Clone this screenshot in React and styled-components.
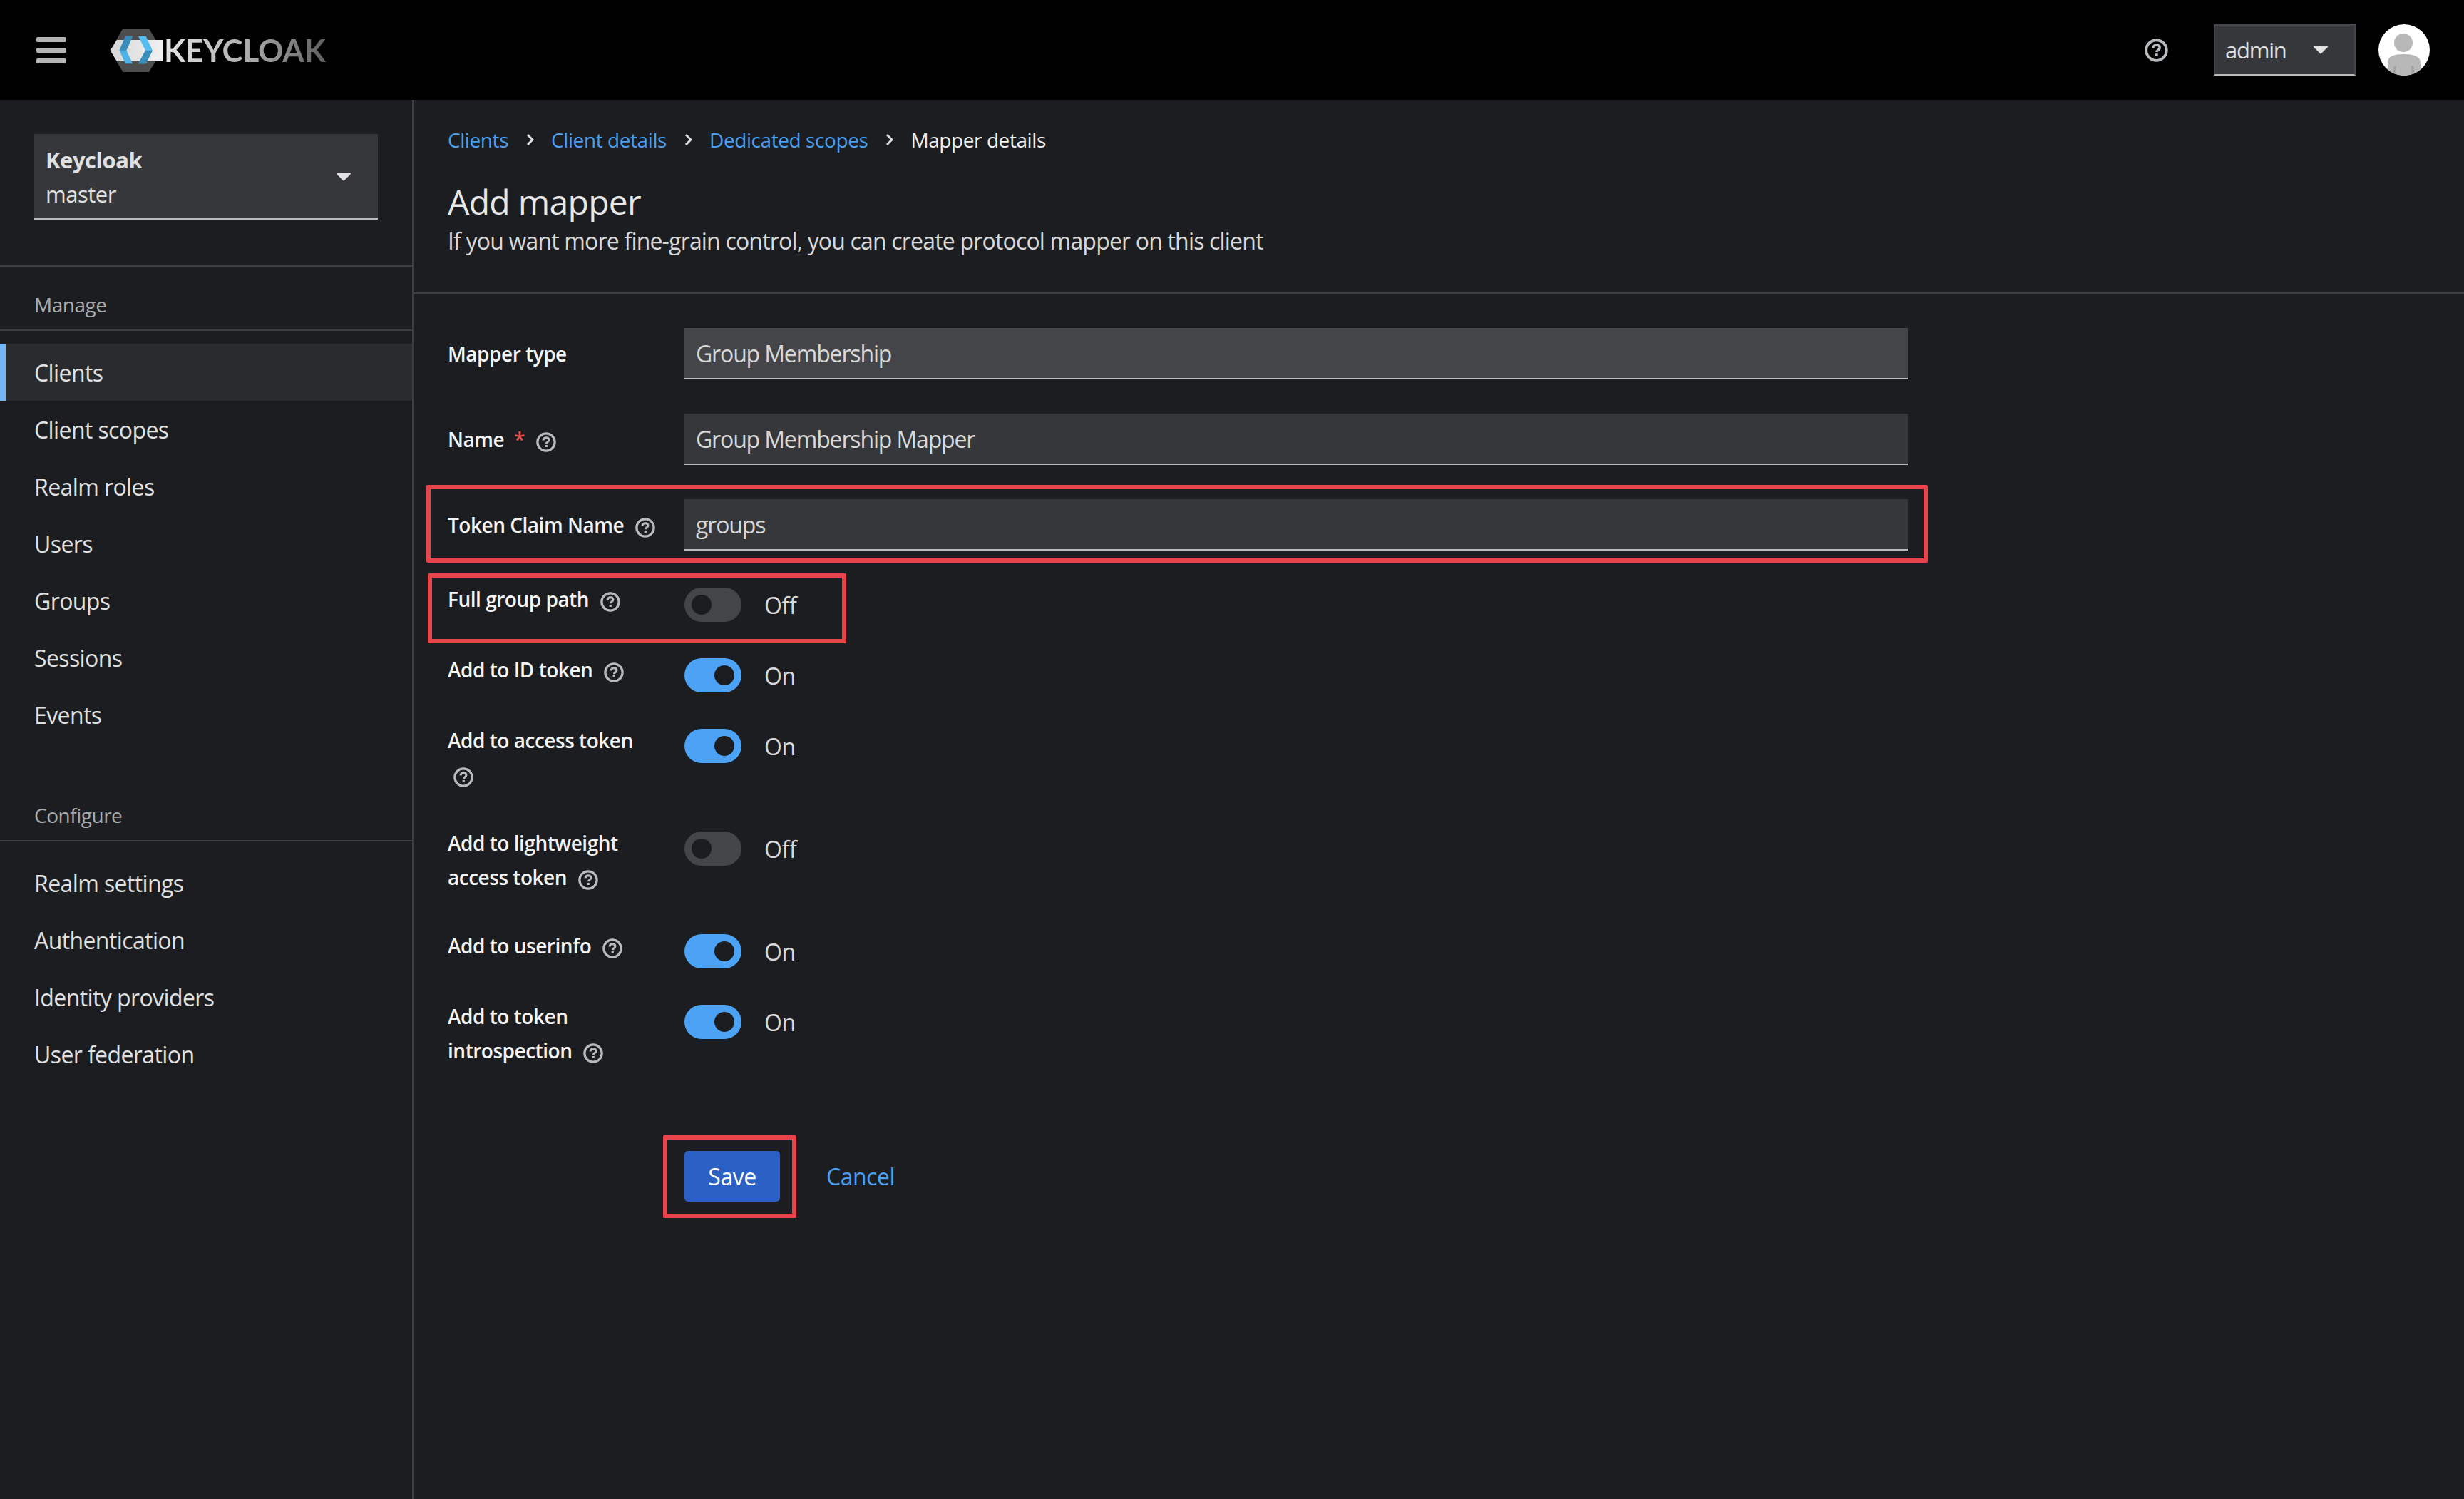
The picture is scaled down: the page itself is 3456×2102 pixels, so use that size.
import React from "react";
import styled, { createGlobalStyle } from "styled-components";

const GlobalStyle = createGlobalStyle`
  html, body {
    margin: 0;
    padding: 0;
    background: #1b1d21;
  }
  * {
    box-sizing: border-box;
  }
  body {
    font-family: "Open Sans", "Noto Sans", sans-serif;
    letter-spacing: -0.48px;
    color: #e0e0e0;
  }
`;

const HelpIcon = ({ size = 28 }) => (
  <svg width={size} height={size} viewBox="0 0 24 24" fill="none">
    <circle cx="12" cy="12" r="10.4" stroke="#b8bbbe" strokeWidth="2.8" />
    <path
      d="M8.6 9.8c0-2 1.5-3.2 3.5-3.2 1.9 0 3.3 1.1 3.3 2.8 0 2.4-3.1 2.4-3.1 4.5"
      stroke="#b8bbbe"
      strokeWidth="2.6"
      fill="none"
    />
    <rect x="10.8" y="15.4" width="2.8" height="2.6" fill="#b8bbbe" />
  </svg>
);

const Caret = () => (
  <svg width="20" height="12" viewBox="0 0 20 12">
    <path d="M1 0.5h18a1 1 0 0 1 .7 1.7l-9 9a1 1 0 0 1-1.4 0l-9-9A1 1 0 0 1 1 .5z" fill="#e0e0e0" />
  </svg>
);

const Logo = () => (
  <svg width="75" height="62" viewBox="70 62 225 186">
    <defs>
      <linearGradient id="logoBand" x1="0" x2="1" y1="0" y2="0">
        <stop offset="0" stopColor="#d6d6d6" />
        <stop offset="0.5" stopColor="#e4e4e4" />
        <stop offset="1" stopColor="#f0f0f0" />
      </linearGradient>
    </defs>
    <path d="M125 65H235L290 157 235 248H125L72 157z" fill="#4d4d4d" />
    <path d="M100 113H293V203H100L72 157z" fill="url(#logoBand)" />
    <path d="M136 97 110 157 136 213H166L140 157 166 97z" fill="#4db3e6" />
    <path d="M136 97H166L140 157H110z" fill="#3a8dbb" />
    <path d="M190 97H222L250 157 222 213H190L220 157z" fill="#56bdf0" />
    <path d="M220 157H250L222 213H190z" fill="#3a8dbb" />
  </svg>
);

const Avatar = () => (
  <svg width="72" height="72" viewBox="0 0 72 72">
    <defs>
      <clipPath id="avatarClip">
        <circle cx="36" cy="36" r="36" />
      </clipPath>
    </defs>
    <g clipPath="url(#avatarClip)">
      <rect width="72" height="72" fill="#fff" />
      <circle cx="35" cy="26" r="13" fill="#b8b8b8" />
      <path d="M13 72V54c0-9 8-12 22-12s24 3 24 12v18z" fill="#b8b8b8" />
      <path d="M21 72V62c0-3 2-4 4-4v14zM50 72V62c0-3-2-4-4-4v14z" fill="#a4a4a4" />
    </g>
  </svg>
);

const Page = styled.div`
  width: 3456px;
  min-height: 2102px;
  display: flex;
  flex-direction: column;
`;

const Header = styled.header`
  height: 140px;
  background: #000;
  display: flex;
  align-items: center;
  padding: 0 48px 0 51px;
`;

const Burger = styled.div`
  width: 42px;
  height: 37px;
  display: flex;
  flex-direction: column;
  justify-content: space-between;
  margin-right: 61px;
`;

const BurgerBar = styled.span`
  display: block;
  height: 7px;
  border-radius: 2px;
  background: #b4b4b4;
`;

const Brand = styled.div`
  display: flex;
  align-items: center;
  gap: 1px;
`;

const BrandName = styled.span`
  font-family: "Lato", "Liberation Sans", sans-serif;
  font-size: 44px;
  font-weight: 700;
  line-height: 62px;
  letter-spacing: -0.2px;
  background: linear-gradient(90deg, #e6e6e6 0%, #a8a8a8 55%, #5f5f5f 100%);
  -webkit-background-clip: text;
  background-clip: text;
  color: transparent;
`;

const HeaderRight = styled.div`
  margin-left: auto;
  display: flex;
  align-items: center;
`;

const HelpButton = styled.div`
  display: flex;
  margin-right: 64px;
`;

const UserMenu = styled.div`
  width: 199px;
  height: 72px;
  background: #36373a;
  border: 2px solid #444548;
  border-bottom: 2px solid #b8bbbe;
  display: flex;
  align-items: center;
  gap: 38px;
  padding: 0 0 0 14px;
  font-size: 31px;
  letter-spacing: -1.24px;
  margin-right: 32px;
`;

const Body = styled.div`
  flex: 1;
  display: flex;
`;

const Sidebar = styled.aside`
  width: 580px;
  flex: none;
  border-right: 2px solid #3c3f42;
  padding-top: 48px;
`;

const RealmBox = styled.div`
  margin: 0 48px;
  width: 482px;
  height: 120px;
  background: #36373a;
  border-bottom: 2px solid #b8bbbe;
  padding: 12px 18px 0 16px;
  position: relative;
  font-size: 31px;
  line-height: 48px;
`;

const RealmName = styled.div`
  font-weight: 700;
`;

const RealmCaret = styled.span`
  position: absolute;
  right: 38px;
  top: 54px;
  display: flex;
`;

const NavSection = styled.div`
  border-top: ${(p) => (p.$first ? "2px solid #3c3f42" : "none")};
  margin-top: ${(p) => p.$top}px;
`;

const NavTitle = styled.div`
  height: 90px;
  padding: 35px 48px 0;
  font-size: 28px;
  line-height: 36px;
  color: #a8abae;
  border-bottom: 2px solid #3c3f42;
  margin-bottom: 18px;
`;

const NavItem = styled.div`
  height: 80px;
  display: flex;
  align-items: center;
  padding-left: 48px;
  font-size: 32px;
  letter-spacing: -0.6px;
  color: #e0e0e0;
  background: ${(p) => (p.$active ? "#292b2f" : "transparent")};
  box-shadow: ${(p) => (p.$active ? "inset 8px 0 0 #73b5f5" : "none")};
`;

const Main = styled.main`
  flex: 1;
  min-width: 0;
`;

const PageHead = styled.div`
  height: 272px;
  border-bottom: 2px solid #3c3f42;
  padding: 34px 48px 0;
`;

const Crumbs = styled.nav`
  display: flex;
  align-items: center;
  height: 44px;
  font-size: 28px;
  letter-spacing: -0.42px;
`;

const Crumb = styled.span`
  color: ${(p) => (p.$link ? "#4a9fee" : "#f0f0f0")};
`;

const CrumbSep = styled.svg`
  margin: 0 24px;
  flex: none;
`;

const Title = styled.h1`
  margin: 36px 0 0;
  font-size: 48px;
  line-height: 58px;
  font-weight: 400;
  letter-spacing: -0.7px;
  color: #e8e8e8;
`;

const Lead = styled.p`
  margin: 2px 0 0;
  font-size: 32px;
  line-height: 48px;
  letter-spacing: -0.82px;
  color: #d8d8d8;
`;

const Form = styled.form`
  padding: 48px 0 0 48px;
  display: flex;
  flex-direction: column;
`;

const Row = styled.div`
  display: flex;
  align-items: ${(p) => (p.$center ? "center" : "flex-start")};
  height: ${(p) => p.$h}px;
  position: relative;
`;

const LabelCell = styled.div`
  width: 332px;
  flex: none;
  padding-right: 24px;
  font-size: 28px;
  font-weight: 600;
  line-height: 48px;
  color: #f4f4f4;
  margin-top: ${(p) => p.$top || 0}px;
`;

const Required = styled.span`
  color: #e8504a;
  margin-left: 14px;
`;

const Hint = styled.span`
  display: ${(p) => (p.$block ? "flex" : "inline-flex")};
  vertical-align: -7px;
  margin-left: ${(p) => p.$gap ?? 16}px;
  margin-top: ${(p) => (p.$block ? 14 : 0)}px;
`;

const TextInput = styled.div`
  width: 1716px;
  height: 72px;
  padding-left: 16px;
  display: flex;
  align-items: center;
  font-size: 32px;
  letter-spacing: -1.15px;
  color: #d8d8d8;
  background: ${(p) => (p.$readOnly ? "#444548" : "#36373a")};
  border-bottom: 2px solid #b8bbbe;
`;

const SwitchWrap = styled.div`
  display: flex;
  align-items: center;
  gap: 32px;
  font-size: 32px;
  letter-spacing: -0.3px;
  color: #d8d8d8;
`;

const Track = styled.span`
  width: 80px;
  height: 48px;
  border-radius: 24px;
  display: flex;
  align-items: center;
  padding: 0 10px;
  justify-content: ${(p) => (p.$on ? "flex-end" : "flex-start")};
  background: ${(p) => (p.$on ? "#4ca3f5" : "#444548")};
`;

const Knob = styled.span`
  width: 28px;
  height: 28px;
  border-radius: 50%;
  background: #1b1d21;
`;

const Actions = styled.div`
  display: flex;
  align-items: center;
  gap: 65px;
  margin: 0 0 0 332px;
`;

const SaveButton = styled.button`
  width: 134px;
  height: 71px;
  border: none;
  border-radius: 5px;
  background: #2b60c4;
  color: #fff;
  font: inherit;
  letter-spacing: inherit;
  font-size: 32px;
`;

const CancelLink = styled.span`
  font-size: 32px;
  color: #4a9fee;
`;

const Highlight = styled.div`
  position: absolute;
  border: 6px solid #e8444c;
  border-radius: 2px;
  left: ${(p) => p.$x}px;
  top: ${(p) => p.$y}px;
  width: ${(p) => p.$w}px;
  height: ${(p) => p.$h}px;
  pointer-events: none;
`;

const Switch = ({ on }) => (
  <SwitchWrap>
    <Track $on={on}>
      <Knob />
    </Track>
    {on ? "On" : "Off"}
  </SwitchWrap>
);

const manageItems = ["Clients", "Client scopes", "Realm roles", "Users", "Groups", "Sessions", "Events"];
const configureItems = ["Realm settings", "Authentication", "Identity providers", "User federation"];

const Separator = () => (
  <CrumbSep width="12" height="18" viewBox="0 0 12 18">
    <path d="M3 2l7 7-7 7" stroke="#e0e0e0" strokeWidth="3" fill="none" />
  </CrumbSep>
);

export default function App() {
  return (
    <Page>
      <GlobalStyle />
      <Header>
        <Burger>
          <BurgerBar />
          <BurgerBar />
          <BurgerBar />
        </Burger>
        <Brand>
          <Logo />
          <BrandName>KEYCLOAK</BrandName>
        </Brand>
        <HeaderRight>
          <HelpButton>
            <HelpIcon size={33} />
          </HelpButton>
          <UserMenu>
            admin
            <Caret />
          </UserMenu>
          <Avatar />
        </HeaderRight>
      </Header>
      <Body>
        <Sidebar>
          <RealmBox>
            <RealmName>Keycloak</RealmName>
            master
            <RealmCaret>
              <Caret />
            </RealmCaret>
          </RealmBox>
          <NavSection $first $top={64}>
            <NavTitle>Manage</NavTitle>
            {manageItems.map((item) => (
              <NavItem key={item} $active={item === "Clients"}>
                {item}
              </NavItem>
            ))}
          </NavSection>
          <NavSection $top={48}>
            <NavTitle>Configure</NavTitle>
            {configureItems.map((item) => (
              <NavItem key={item}>{item}</NavItem>
            ))}
          </NavSection>
        </Sidebar>
        <Main>
          <PageHead>
            <Crumbs>
              <Crumb $link>Clients</Crumb>
              <Separator />
              <Crumb $link>Client details</Crumb>
              <Separator />
              <Crumb $link>Dedicated scopes</Crumb>
              <Separator />
              <Crumb>Mapper details</Crumb>
            </Crumbs>
            <Title>Add mapper</Title>
            <Lead>If you want more fine-grain control, you can create protocol mapper on this client</Lead>
          </PageHead>
          <Form>
            <Row $h={120}>
              <LabelCell $top={12}>Mapper type</LabelCell>
              <TextInput $readOnly>Group Membership</TextInput>
            </Row>
            <Row $h={120}>
              <LabelCell $top={12}>
                Name<Required>*</Required>
                <Hint>
                  <HelpIcon />
                </Hint>
              </LabelCell>
              <TextInput>Group Membership Mapper</TextInput>
            </Row>
            <Row $h={124}>
              <LabelCell $top={12}>
                Token Claim Name
                <Hint>
                  <HelpIcon />
                </Hint>
              </LabelCell>
              <TextInput>groups</TextInput>
              <Highlight $x={-30} $y={-20} $w={2106} $h={109} />
            </Row>
            <Row $h={99}>
              <LabelCell $top={-8}>
                Full group path
                <Hint>
                  <HelpIcon />
                </Hint>
              </LabelCell>
              <Switch />
              <Highlight $x={-28} $y={-20} $w={587} $h={98} />
            </Row>
            <Row $h={99}>
              <LabelCell $top={-8}>
                Add to ID token
                <Hint>
                  <HelpIcon />
                </Hint>
              </LabelCell>
              <Switch on />
            </Row>
            <Row $h={144}>
              <LabelCell $top={-8}>
                Add to access token
                <Hint $block $gap={8}>
                  <HelpIcon />
                </Hint>
              </LabelCell>
              <Switch on />
            </Row>
            <Row $h={144}>
              <LabelCell $top={-8}>
                Add to lightweight access token
                <Hint>
                  <HelpIcon />
                </Hint>
              </LabelCell>
              <Switch />
            </Row>
            <Row $h={99}>
              <LabelCell $top={-8}>
                Add to userinfo
                <Hint>
                  <HelpIcon />
                </Hint>
              </LabelCell>
              <Switch on />
            </Row>
            <Row $h={205}>
              <LabelCell $top={-8}>
                Add to token introspection
                <Hint>
                  <HelpIcon />
                </Hint>
              </LabelCell>
              <Switch on />
            </Row>
            <Row $center $h={71}>
              <Actions>
                <SaveButton type="button">Save</SaveButton>
                <CancelLink>Cancel</CancelLink>
              </Actions>
              <Highlight $x={302} $y={-22} $w={187} $h={116} />
            </Row>
          </Form>
        </Main>
      </Body>
    </Page>
  );
}
